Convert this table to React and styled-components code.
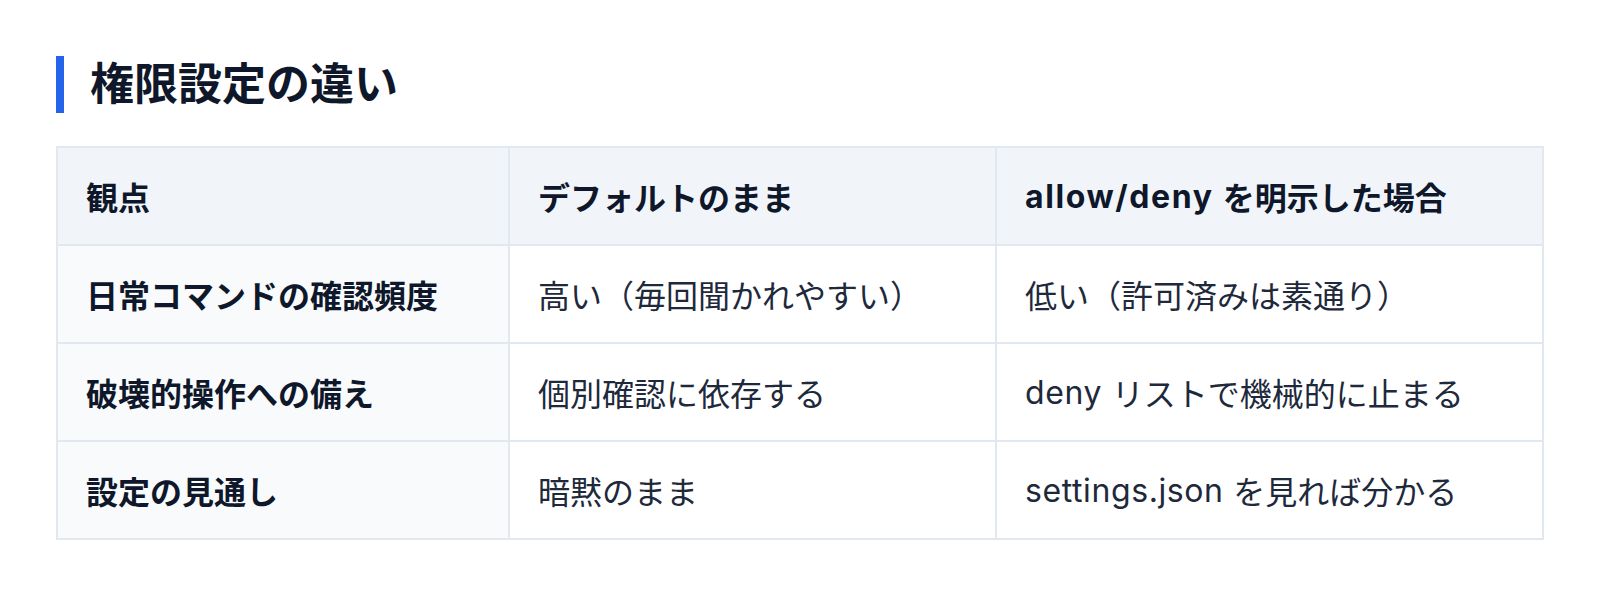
import { createGlobalStyle, styled } from 'styled-components';

const GlobalStyle = createGlobalStyle`
body {
  margin: 0;
  background: #ffffff;
  font-family: "Inter", "Noto Sans CJK JP", sans-serif;
  color: #0f172a;
}
`

const Page = styled.div`
padding: 56px 56px;
`

const Title = styled.h2`
margin: 0 0 33px 0;
border-left: 8px solid #2563eb;
padding-left: 26px;
font-size: 44px;
line-height: 57px;
font-weight: 700;
color: #0f172a;
`

const Grid = styled.div`
display: grid;
grid-template-columns: 450px 485px 545px;
gap: 2px;
padding: 2px;
background-color: #e2e8f0;
`

const Cell = styled.div`
height: 96px;
display: flex;
align-items: center;
padding: 0 28px;
font-size: 32px;
font-weight: ${(p) => (p.$bold ? 700 : 400)};
color: ${(p) => (p.$bold ? '#0f172a' : '#1e293b')};
background-color: ${(p) => (p.$head ? '#f1f5f9' : p.$bold ? '#f8fafc' : '#ffffff')};
white-space: pre;
`

// latin runs are a touch wider in the original
const Latin = styled.span`
letter-spacing: ${(p) => (p.$bold ? '1.6px' : '0.6px')};
`

const head = ['観点', 'デフォルトのまま', 'allow/deny を明示した場合'];

const rows = [
  ['日常コマンドの確認頻度', '高い（毎回聞かれやすい）', '低い（許可済みは素通り）'],
  ['破壊的操作への備え', '個別確認に依存する', 'deny リストで機械的に止まる'],
  ['設定の見通し', '暗黙のまま', 'settings.json を見れば分かる'],
];

const Text = ({ children, bold }) =>
  children.split(/([A-Za-z./]+ ?)/).map((part, i) =>
    /[A-Za-z]/.test(part) ? <Latin key={i} $bold={bold}>{part}</Latin> : part
  );

export default function App() {
  return (
    <Page>
      <GlobalStyle />
      <Title>権限設定の違い</Title>
      <Grid>
        {head.map((h) => (
          <Cell key={h} $head $bold><Text bold>{h}</Text></Cell>
        ))}
        {rows.map((r) =>
          r.map((c, i) => (
            <Cell key={c} $bold={i === 0}><Text bold={i === 0}>{c}</Text></Cell>
          ))
        )}
      </Grid>
    </Page>
  );
}
